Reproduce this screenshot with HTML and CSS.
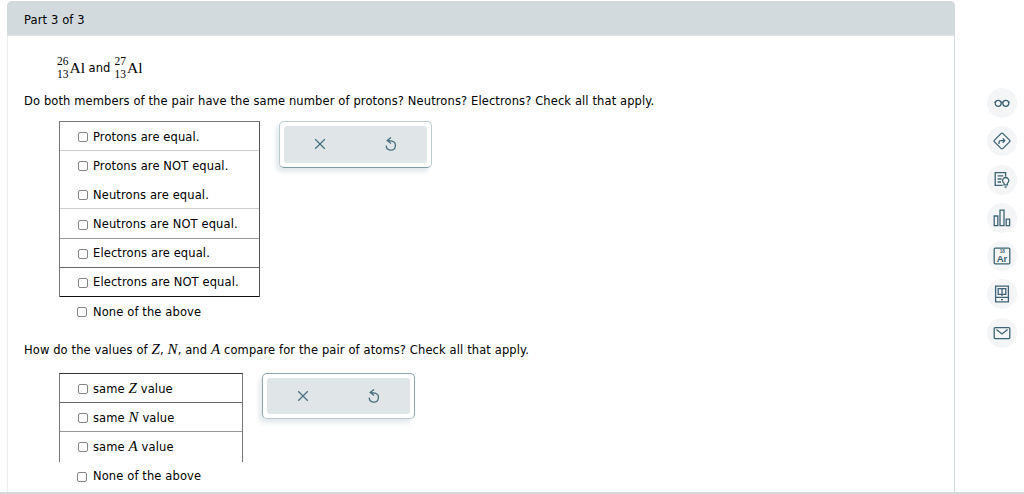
FILE: index.html
```html
<!DOCTYPE html>
<html lang="en">
<head>
    <meta charset="UTF-8">
    <title>Part 3 of 3</title>
    <link rel="stylesheet" href="styles.css">
</head>
<body>
    <div class="page">
        <div class="panel">
            <div class="panel-header">Part 3 of 3</div>
            <div class="content">
                <div class="pair">
                    <span class="nuclide"><span class="numbers"><span>26</span><span>13</span></span><span class="symbol">Al</span></span>
                    <span class="and">and</span>
                    <span class="nuclide"><span class="numbers"><span>27</span><span>13</span></span><span class="symbol">Al</span></span>
                </div>

                <p class="question q1">Do both members of the pair have the same number of protons? Neutrons? Electrons? Check all that apply.</p>
                <div class="answer">
                    <div class="choices">
                        <div class="box box-particles">
                            <label class="light"><input type="checkbox"><span>Protons are equal.</span></label>
                            <label class="blank"><input type="checkbox"><span>Protons are NOT equal.</span></label>
                            <label class="light"><input type="checkbox"><span>Neutrons are equal.</span></label>
                            <label class="mid"><input type="checkbox"><span>Neutrons are NOT equal.</span></label>
                            <label class="dark"><input type="checkbox"><span>Electrons are equal.</span></label>
                            <label class="black"><input type="checkbox"><span>Electrons are NOT equal.</span></label>
                        </div>
                        <label class="none"><input type="checkbox"><span>None of the above</span></label>
                    </div>
                    <div class="tools">
                        <div class="tools-inner">
                            <svg width="12" height="12" viewBox="0 0 12 12"><path d="M1.2 1.2l9.6 9.6M10.8 1.2l-9.6 9.6"/></svg>
                            <svg width="12" height="14" viewBox="0 0 12 14"><path d="M6 .4L2.2 3.4 6 6.4M2.4 3.5L7 4.1A4.6 4.6 0 1 1 1.2 8.6"/></svg>
                        </div>
                    </div>
                </div>

                <p class="question q2">How do the values of <i>Z</i>, <i>N</i>, and <i>A</i> compare for the pair of atoms? Check all that apply.</p>
                <div class="answer">
                    <div class="choices">
                        <div class="box box-values">
                            <label class="dark"><input type="checkbox"><span>same <i>Z</i> value</span></label>
                            <label class="mid"><input type="checkbox"><span>same <i>N</i> value</span></label>
                            <label class="blank"><input type="checkbox"><span>same <i>A</i> value</span></label>
                        </div>
                        <label class="none"><input type="checkbox"><span>None of the above</span></label>
                    </div>
                    <div class="tools tools-second">
                        <div class="tools-inner">
                            <svg width="12" height="12" viewBox="0 0 12 12"><path d="M1.2 1.2l9.6 9.6M10.8 1.2l-9.6 9.6"/></svg>
                            <svg width="12" height="14" viewBox="0 0 12 14"><path d="M6 .4L2.2 3.4 6 6.4M2.4 3.5L7 4.1A4.6 4.6 0 1 1 1.2 8.6"/></svg>
                        </div>
                    </div>
                </div>
            </div>
        </div>

        <div class="sidebar">
            <!-- glasses -->
            <button><svg viewBox="0 0 18 18"><circle cx="5.2" cy="9.3" r="3"/><circle cx="12.8" cy="9.3" r="3"/><path d="M8 8.6q1-.7 2 0M2.4 8.4L1.4 8.2M15.6 8.4l1-.2"/></svg></button>
            <!-- directions -->
            <button><svg viewBox="0 0 18 18"><path d="M8 1.6q1-1 2 0l6.5 6.5q.9.9 0 1.8L10 16.4q-1 1-2 0L1.5 9.9q-.9-.9 0-1.8z"/><path d="M6 12v-1.8q0-1.6 1.6-1.6h3.8M9.7 6.4l2.1 2.2-2.1 2.2"/></svg></button>
            <!-- notes with hint -->
            <button><svg viewBox="0 0 18 18"><path d="M9.6 14.4H2.2V1.6h10.4v4.2M4.6 4.8h5.6M4.6 8h4M4.6 11h3.4"/><path d="M11 12.2a3.1 3.1 0 1 1 3.4 0v1.6H11zM11.7 16h2"/></svg></button>
            <!-- bar chart -->
            <button><svg viewBox="0 0 18 18"><path d="M1.2 7h3.6v9.6H1.2zM7 1.2h4v15.4H7zM13.2 10.2h3.4v6.4h-3.4z"/></svg></button>
            <!-- periodic table -->
            <button><svg viewBox="0 0 18 18"><rect x="1.2" y="1.2" width="15.6" height="15.6" rx="1"/><text class="tiny" x="9.2" y="6.2">18</text><text class="element" x="9" y="14.5">Ar</text></svg></button>
            <!-- reference book -->
            <button><svg viewBox="0 0 18 18"><path d="M2.6 1.2h12.8v15.6H2.6zM2.6 12.4h12.8M5.2 3.6H9v5.8H5.2zM9 3.6h3.8v5.8H9zM9 9.6v1.3M8 14.7h2"/></svg></button>
            <!-- mail -->
            <button><svg viewBox="0 0 18 18"><rect x="1.2" y="3.6" width="15.6" height="11" rx="1"/><path d="M3.4 5.4L9 10l5.6-4.6"/></svg></button>
        </div>
    </div>
</body>
</html>
```

FILE: styles.css
```css
* {
    box-sizing: border-box;
}
body {
    margin: 0;
    background: #fff;
    color: #000;
    font-family: Verdana, "DejaVu Sans", sans-serif;
    font-size: 11.5px;
    letter-spacing: 0.115px;
}
.page {
    display: flex;
    height: 494px;
    padding: 1px 0 0 7px;
    border-bottom: 2px solid #d2dadd;
    overflow: hidden;
}
.panel {
    width: 948px;
    border-left: 1px solid #edf0f1;
    border-right: 1px solid #d2dbdf;
    border-radius: 5px 5px 0 0;
}
.panel-header {
    height: 35px;
    margin: 0 -1px;
    padding-left: 17px;
    line-height: 38px;
    background: #d2dadd;
    border-bottom: 1px solid #dde3e5;
    border-radius: 5px 5px 0 0;
}
.content {
    padding-left: 16px;
}
.pair {
    display: flex;
    align-items: center;
    height: 30px;
    margin: 17px 0 0 33px;
}
.nuclide {
    display: flex;
    align-items: center;
    font-family: "Liberation Serif", serif;
    letter-spacing: 0;
}
.numbers {
    display: flex;
    flex-direction: column;
    margin-right: 1px;
    font-size: 11.5px;
    line-height: 13px;
}
.symbol {
    font-size: 15.5px;
}
.and {
    margin: 0 4px 0 3.5px;
}
.question {
    margin: 0;
    height: 20px;
    line-height: 20px;
    white-space: nowrap;
}
.q1 {
    margin-top: 8px;
    margin-bottom: 10px;
}
.q2 {
    margin-top: 14px;
    margin-bottom: 13px;
}
i {
    font-family: "Liberation Serif", serif;
    font-size: 15px;
    line-height: 1;
}
.answer {
    display: flex;
    padding-left: 35px;
}
.box {
    border: 1px solid #777;
    border-bottom: 0;
}
.box-particles {
    width: 201px;
    border-right-color: #555;
}
.box-values {
    width: 184px;
    border-top-color: #333;
}
label {
    display: flex;
    align-items: center;
    height: 29.17px;
    padding: 1px 0 0 17px;
    border-bottom: 1px solid transparent;
}
.light {
    border-bottom-color: #ccc;
}
.mid {
    border-bottom-color: #999;
}
.dark {
    border-bottom-color: #666;
}
.black {
    border-bottom-color: #111;
}
.none {
    padding-left: 17px;
}
.box + .none input {
    margin-right: 6px;
}
input {
    appearance: none;
    flex: none;
    width: 10px;
    height: 10px;
    margin: 1px 5px 0 1px;
    border: 1px solid #858585;
    border-radius: 2px;
    background: #fff;
}
.tools {
    width: 153px;
    height: 47px;
    margin-left: 19px;
    padding: 4px;
    border: 1px solid #bdcbd1;
    border-bottom-color: #7d9aa7;
    border-radius: 5px;
    box-shadow: -3px 4px 5px #e3e9ec;
}
.tools-second {
    height: 46px;
    border-color: #8ba5af;
    border-bottom-color: #bdcbd1;
}
.tools-inner {
    display: flex;
    align-items: center;
    justify-content: space-around;
    height: 100%;
    padding-bottom: 1px;
    background: #e0e5e7;
    border-radius: 3px;
}
svg {
    fill: none;
    stroke: #4c7282;
    stroke-width: 1.3;
}
.sidebar {
    display: flex;
    flex-direction: column;
    gap: 8.3px;
    padding: 87px 0 0 32px;
}
.sidebar button {
    display: flex;
    align-items: center;
    justify-content: center;
    width: 30px;
    height: 30px;
    padding: 0;
    border: 0;
    border-radius: 50%;
    background: #f3f5f7;
    letter-spacing: 0;
}
.sidebar svg {
    width: 18px;
    height: 18px;
    stroke: #3f6475;
}
.sidebar text {
    fill: #3f6475;
    stroke: none;
    font-family: "Liberation Sans", sans-serif;
    font-weight: bold;
    text-anchor: middle;
}
.tiny {
    font-size: 4.5px;
}
.element {
    font-size: 9.5px;
}
```
